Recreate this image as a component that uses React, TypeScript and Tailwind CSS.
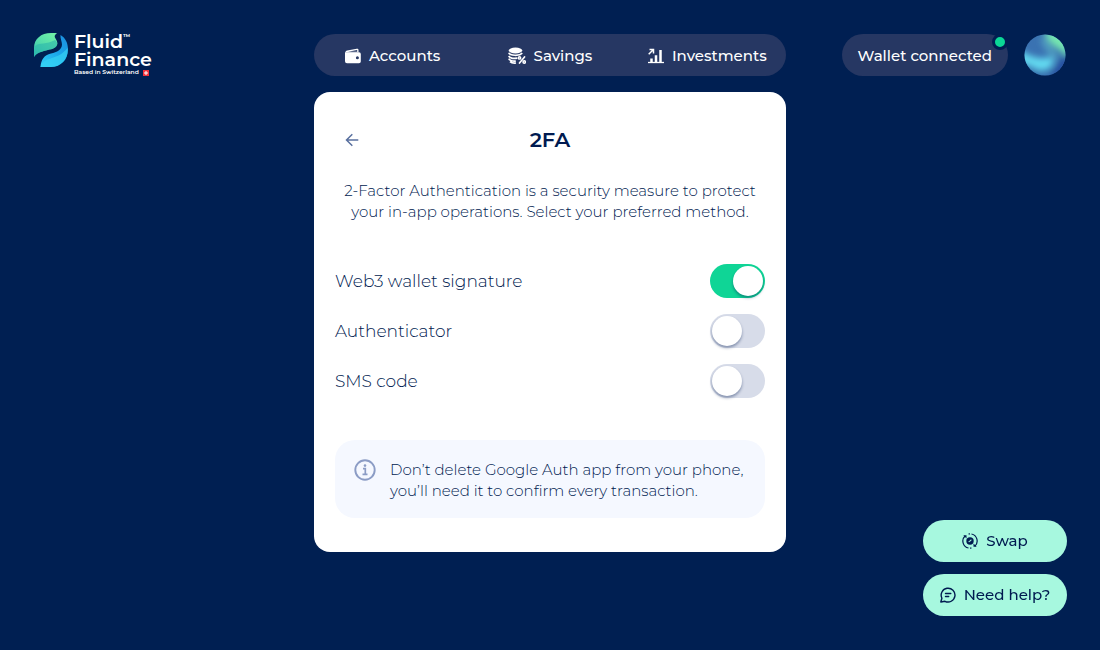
import { useState } from 'react';

type IconProps = { className?: string };

function LogoMark() {
  return (
    <svg viewBox="0 0 34 34" className="size-[34px] shrink-0" aria-hidden="true">
      <defs>
        <linearGradient id="leaf" x1="0.8" y1="0" x2="0.1" y2="1">
          <stop offset="0" stopColor="#6ff0a6" />
          <stop offset="0.5" stopColor="#54dcab" />
          <stop offset="1" stopColor="#2fc0b0" />
        </linearGradient>
        <linearGradient id="wave" x1="0.9" y1="0" x2="0.2" y2="1">
          <stop offset="0" stopColor="#1b8fe0" />
          <stop offset="0.5" stopColor="#1ba5ea" />
          <stop offset="1" stopColor="#2fc8f4" />
        </linearGradient>
      </defs>
      <path d="M0 24V15C0 6 7 0 17 0h6c-2.500 2-3 3.500-1.500 5.500 1.500 2.500 2.500 4.500 1.500 6.500-1.500 4-6 4-11 5.500C6 19 2 20.500 0 24Z" fill="url(#leaf)" />
      <path d="M1 13C6 9 12 12 21 7c1.500 2 3 3 2 5-1.500 4-6 4-11 5.500C6 19 2 20.500 0 24v-8c0-1 .5-2 1-3Z" fill="#2cb5ac" opacity=".6" />
      <path d="M26.500 2c5 3 7.500 8 7.500 14.500C34 26.500 27 34 17 34H6.500C7 27 10 22 17 20.500c6-1.300 11-4 11-9 0-3-2-6.500-1.500-9.500Z" fill="url(#wave)" />
      <path d="M6.500 34c3-11 17-6 27-19 1.500 10-6 19-17 19Z" fill="#35d2f4" opacity=".7" />
    </svg>
  );
}

function SwissFlag() {
  return (
    <svg viewBox="0 0 6 6" className="size-[6px]" aria-hidden="true">
      <path d="M0 0h6v6H0z" fill="#f0323c" />
      <path d="M2.5 1h1v1.500H5v1H3.500V5h-1V3.500H1v-1h1.500z" fill="#fff" />
    </svg>
  );
}

function WalletIcon({ className }: IconProps) {
  return (
    <svg viewBox="0 0 16 16" className={className} aria-hidden="true">
      <path d="M.3 4.600C.6 3.300 1.200 2.800 2.200 2.600L11.800.7c1-.2 1.700.3 1.700 1.300v2.300H.3Z" fill="currentColor" />
      <path d="M3 3.700 12.200 2v1.700Z" fill="#263763" />
      <path fillRule="evenodd" d="M0 4.300h14a1.800 1.800 0 0 1 1.800 1.800v7.400a1.800 1.800 0 0 1-1.800 1.800H2A2 2 0 0 1 0 13.300Zm12.400 4a1.500 1.500 0 1 0 0 3 1.500 1.500 0 0 0 0-3Z" fill="currentColor" />
    </svg>
  );
}

function CoinsIcon({ className }: IconProps) {
  return (
    <svg viewBox="0 0 18 17" className={className} fill="none" stroke="currentColor" aria-hidden="true">
      <ellipse cx="7.500" cy="3.500" rx="6.800" ry="2.900" fill="currentColor" stroke="none" />
      <path d="M.8 5.800c1 3 11 3.500 13.400.3M.8 8.800c1 2.300 5 2.800 8.500 2.400M.8 11.600c1 2 4 2.700 7 2.500M2 14.600c1.500 1.300 4 1.700 6 1.400" strokeWidth="1.700" />
      <path d="m11.500 16 5-6" strokeWidth="1.700" strokeLinecap="round" />
      <circle cx="11.500" cy="10.900" r="1.200" strokeWidth="1.500" />
      <circle cx="16.200" cy="15" r="1.200" strokeWidth="1.500" />
    </svg>
  );
}

function GrowthIcon({ className }: IconProps) {
  return (
    <svg viewBox="0 0 16 16" className={className} fill="none" stroke="currentColor" aria-hidden="true">
      <path d="M0 14.500h16" strokeWidth="1.300" />
      <path d="M3.500 14v-3.500M8 14V7.300M12.500 14V2" strokeWidth="2.500" />
      <path d="m.7 6.300 4-4M1.500 1.500h4v4" strokeWidth="1.500" />
    </svg>
  );
}

function BackArrow({ className }: IconProps) {
  return (
    <svg viewBox="0 0 14 14" className={className} fill="none" stroke="currentColor" strokeWidth="1.500" aria-hidden="true">
      <path d="M13.300 7H1.500M7.300 1.200 1.500 7l5.800 5.800" />
    </svg>
  );
}

function InfoIcon({ className }: IconProps) {
  return (
    <svg viewBox="0 0 22 22" className={className} fill="none" stroke="currentColor" aria-hidden="true">
      <circle cx="11" cy="11" r="9.700" strokeWidth="1.900" />
      <path d="M9 9.600h2.300v5.600M8.500 15.300h5" strokeWidth="1.700" />
      <circle cx="11" cy="6.600" r="1.300" fill="currentColor" stroke="none" />
    </svg>
  );
}

function SwapIcon({ className }: IconProps) {
  return (
    <svg viewBox="0 0 16 16" className={className} fill="none" stroke="currentColor" strokeWidth="1.200" aria-hidden="true">
      <path d="M6.500 15A7.100 7.100 0 0 1 3 3M9.500 1A7.100 7.100 0 0 1 13 13M6.500 1l1.500-.2M9.500 15l-1.500.2" />
      <path d="M1.300 2.200h3.200v3.200ZM14.700 13.800h-3.200v-3.200Z" fill="currentColor" stroke="none" />
      <circle cx="8" cy="8" r="3.700" fill="currentColor" stroke="none" />
      <path d="M6.800 9.200c.3-1.800 2-.8 2.400-2.500" stroke="#a7f8df" strokeWidth="1.100" />
    </svg>
  );
}

function ChatIcon({ className }: IconProps) {
  return (
    <svg viewBox="0 0 16 16" className={className} fill="none" stroke="currentColor" strokeWidth="1.400" strokeLinecap="round" strokeLinejoin="round" aria-hidden="true">
      <path d="M1.900 11.200A6.900 6.900 0 1 1 5 14.300L.8 15Z" />
      <path d="M5.500 6.500h5.300M5.500 9.500h3.200" />
    </svg>
  );
}

function Avatar() {
  return (
    <svg viewBox="0 0 42 42" className="size-[42px]" aria-hidden="true">
      <defs>
        <clipPath id="avatar-clip"><circle cx="21" cy="21" r="20.500" /></clipPath>
        <filter id="avatar-blur" x="-50%" y="-50%" width="200%" height="200%">
          <feGaussianBlur stdDeviation="3" />
        </filter>
      </defs>
      <g clipPath="url(#avatar-clip)">
        <path d="M0 0h42v42H0z" fill="#3a72b2" />
        <g filter="url(#avatar-blur)">
          <path d="M-5 16C4 20 10 25 20 24c9-1 12 1 8 7-6 9-16 5-20 2l-13-5Z" fill="#62d9f0" />
          <path d="M20-4c2 9 8 16 15 19l10 9V-4Z" fill="#74e6b0" />
          <path d="M22 4c3 7 8 12 13 18l-5 4c-7-7-11-13-14-22Z" fill="#55a9c4" opacity=".8" />
          <path d="M38 22c-3 9-8 14-16 20h24V22Z" fill="#2850a0" />
          <path d="M-4 32c7 4 12 8 22 8v6H-4Z" fill="#2f64a8" />
        </g>
      </g>
    </svg>
  );
}

const navItems = [
  { label: 'Accounts', Icon: WalletIcon, size: 'h-4 w-4' },
  { label: 'Savings', Icon: CoinsIcon, size: 'h-[17px] w-[18px]' },
  { label: 'Investments', Icon: GrowthIcon, size: 'h-4 w-4' },
];

const methods = [
  { id: 'web3', label: 'Web3 wallet signature' },
  { id: 'authenticator', label: 'Authenticator' },
  { id: 'sms', label: 'SMS code' },
];

export default function App() {
  const [enabled, setEnabled] = useState<Record<string, boolean>>({ web3: true });

  return (
    <div className="min-h-screen bg-[#001f52] pb-8 font-['Montserrat','Inter',sans-serif] text-[#001a50]">
      <header className="grid grid-cols-[1fr_minmax(0,472px)_1fr] items-center px-[34px] pt-[33px]">
        <a href="#" className="flex items-start gap-1.5 text-white" aria-label="Fluid Finance">
          <LogoMark />
          <span className="flex flex-col">
            <span className="text-[19px] leading-[18px] font-semibold">
              <span className="flex items-start">Fluid<span className="text-[7px] leading-[8px]">™</span></span>
              <span className="block">Finance</span>
            </span>
            <span className="flex items-center gap-1 text-[6px] leading-[7px] font-semibold whitespace-nowrap">
              Based in Switzerland <SwissFlag />
            </span>
          </span>
        </a>
        <nav className="grid h-[42px] grid-cols-3 items-center rounded-full bg-[#263763] pt-0.5 text-white">
          {navItems.map(({ label, Icon, size }) => (
            <a key={label} href="#" className="flex items-center justify-center gap-2 text-[15px] leading-5 font-medium">
              <Icon className={size} />
              {label}
            </a>
          ))}
        </nav>
        <div className="flex items-center justify-end gap-4">
          <button type="button" className="relative h-[42px] rounded-full bg-[#263763] px-4 pt-0.5 text-[15px] leading-5 font-medium whitespace-nowrap text-white">
            Wallet connected
            <span className="absolute top-0 right-0 size-4 rounded-full border-[3px] border-[#001f52] bg-[#0bd796]" />
          </button>
          <button type="button" aria-label="Profile" className="shrink-0 rounded-full">
            <Avatar />
          </button>
        </div>
      </header>

      <main className="mx-auto mt-4 w-full max-w-[472px] rounded-2xl bg-white px-[21px] pt-8 pb-[34px]">
        <div className="grid grid-cols-[34px_1fr_34px] items-center">
          <button type="button" aria-label="Back" className="flex h-8 items-center justify-center text-[#59709f]">
            <BackArrow className="size-[14px]" />
          </button>
          <h1 className="text-center text-[21px] leading-8 font-semibold">2FA</h1>
        </div>
        <p className="mt-6 text-center text-[15px] leading-[21px] font-light">
          2-Factor Authentication is a security measure to protect
          <br />
          your in-app operations. Select your preferred method.
        </p>

        <div className="mt-[42px] flex flex-col gap-4">
          {methods.map(({ id, label }) => (
            <label key={id} className="flex cursor-pointer items-center justify-between text-[17px] font-light">
              <span className="pt-0.5">{label}</span>
              <input
                type="checkbox"
                role="switch"
                checked={!!enabled[id]}
                onChange={(e) => setEnabled({ ...enabled, [id]: e.target.checked })}
                className="flex h-[34px] w-[55px] cursor-pointer appearance-none items-center rounded-full bg-[#d7dce9] px-0.5 before:size-[30px] before:rounded-full before:bg-white before:shadow-[0_2px_3px_rgba(5,31,82,0.4)] before:content-[''] checked:justify-end checked:bg-[#0fd596]"
              />
            </label>
          ))}
        </div>

        <div className="mt-[42px] flex items-start gap-[14px] rounded-[20px] bg-[#f5f8ff] px-[19px] pt-[19px] pb-[17px]">
          <InfoIcon className="size-[22px] shrink-0 text-[#8b9cc5]" />
          <p className="text-[15px] leading-[21px] font-light">
            Don’t delete Google Auth app from your phone,
            <br />
            you’ll need it to confirm every transaction.
          </p>
        </div>
      </main>

      <div className="fixed right-[33px] bottom-[34px] flex w-36 flex-col gap-3">
        <button type="button" className="flex h-[42px] items-center justify-center gap-2 rounded-full bg-[#a7f8df] text-[15px] leading-5 font-medium">
          <SwapIcon className="size-4" />
          Swap
        </button>
        <button type="button" className="flex h-[42px] items-center justify-center gap-2 rounded-full bg-[#a7f8df] text-[15px] leading-5 font-medium">
          <ChatIcon className="size-4" />
          Need help?
        </button>
      </div>
    </div>
  );
}
